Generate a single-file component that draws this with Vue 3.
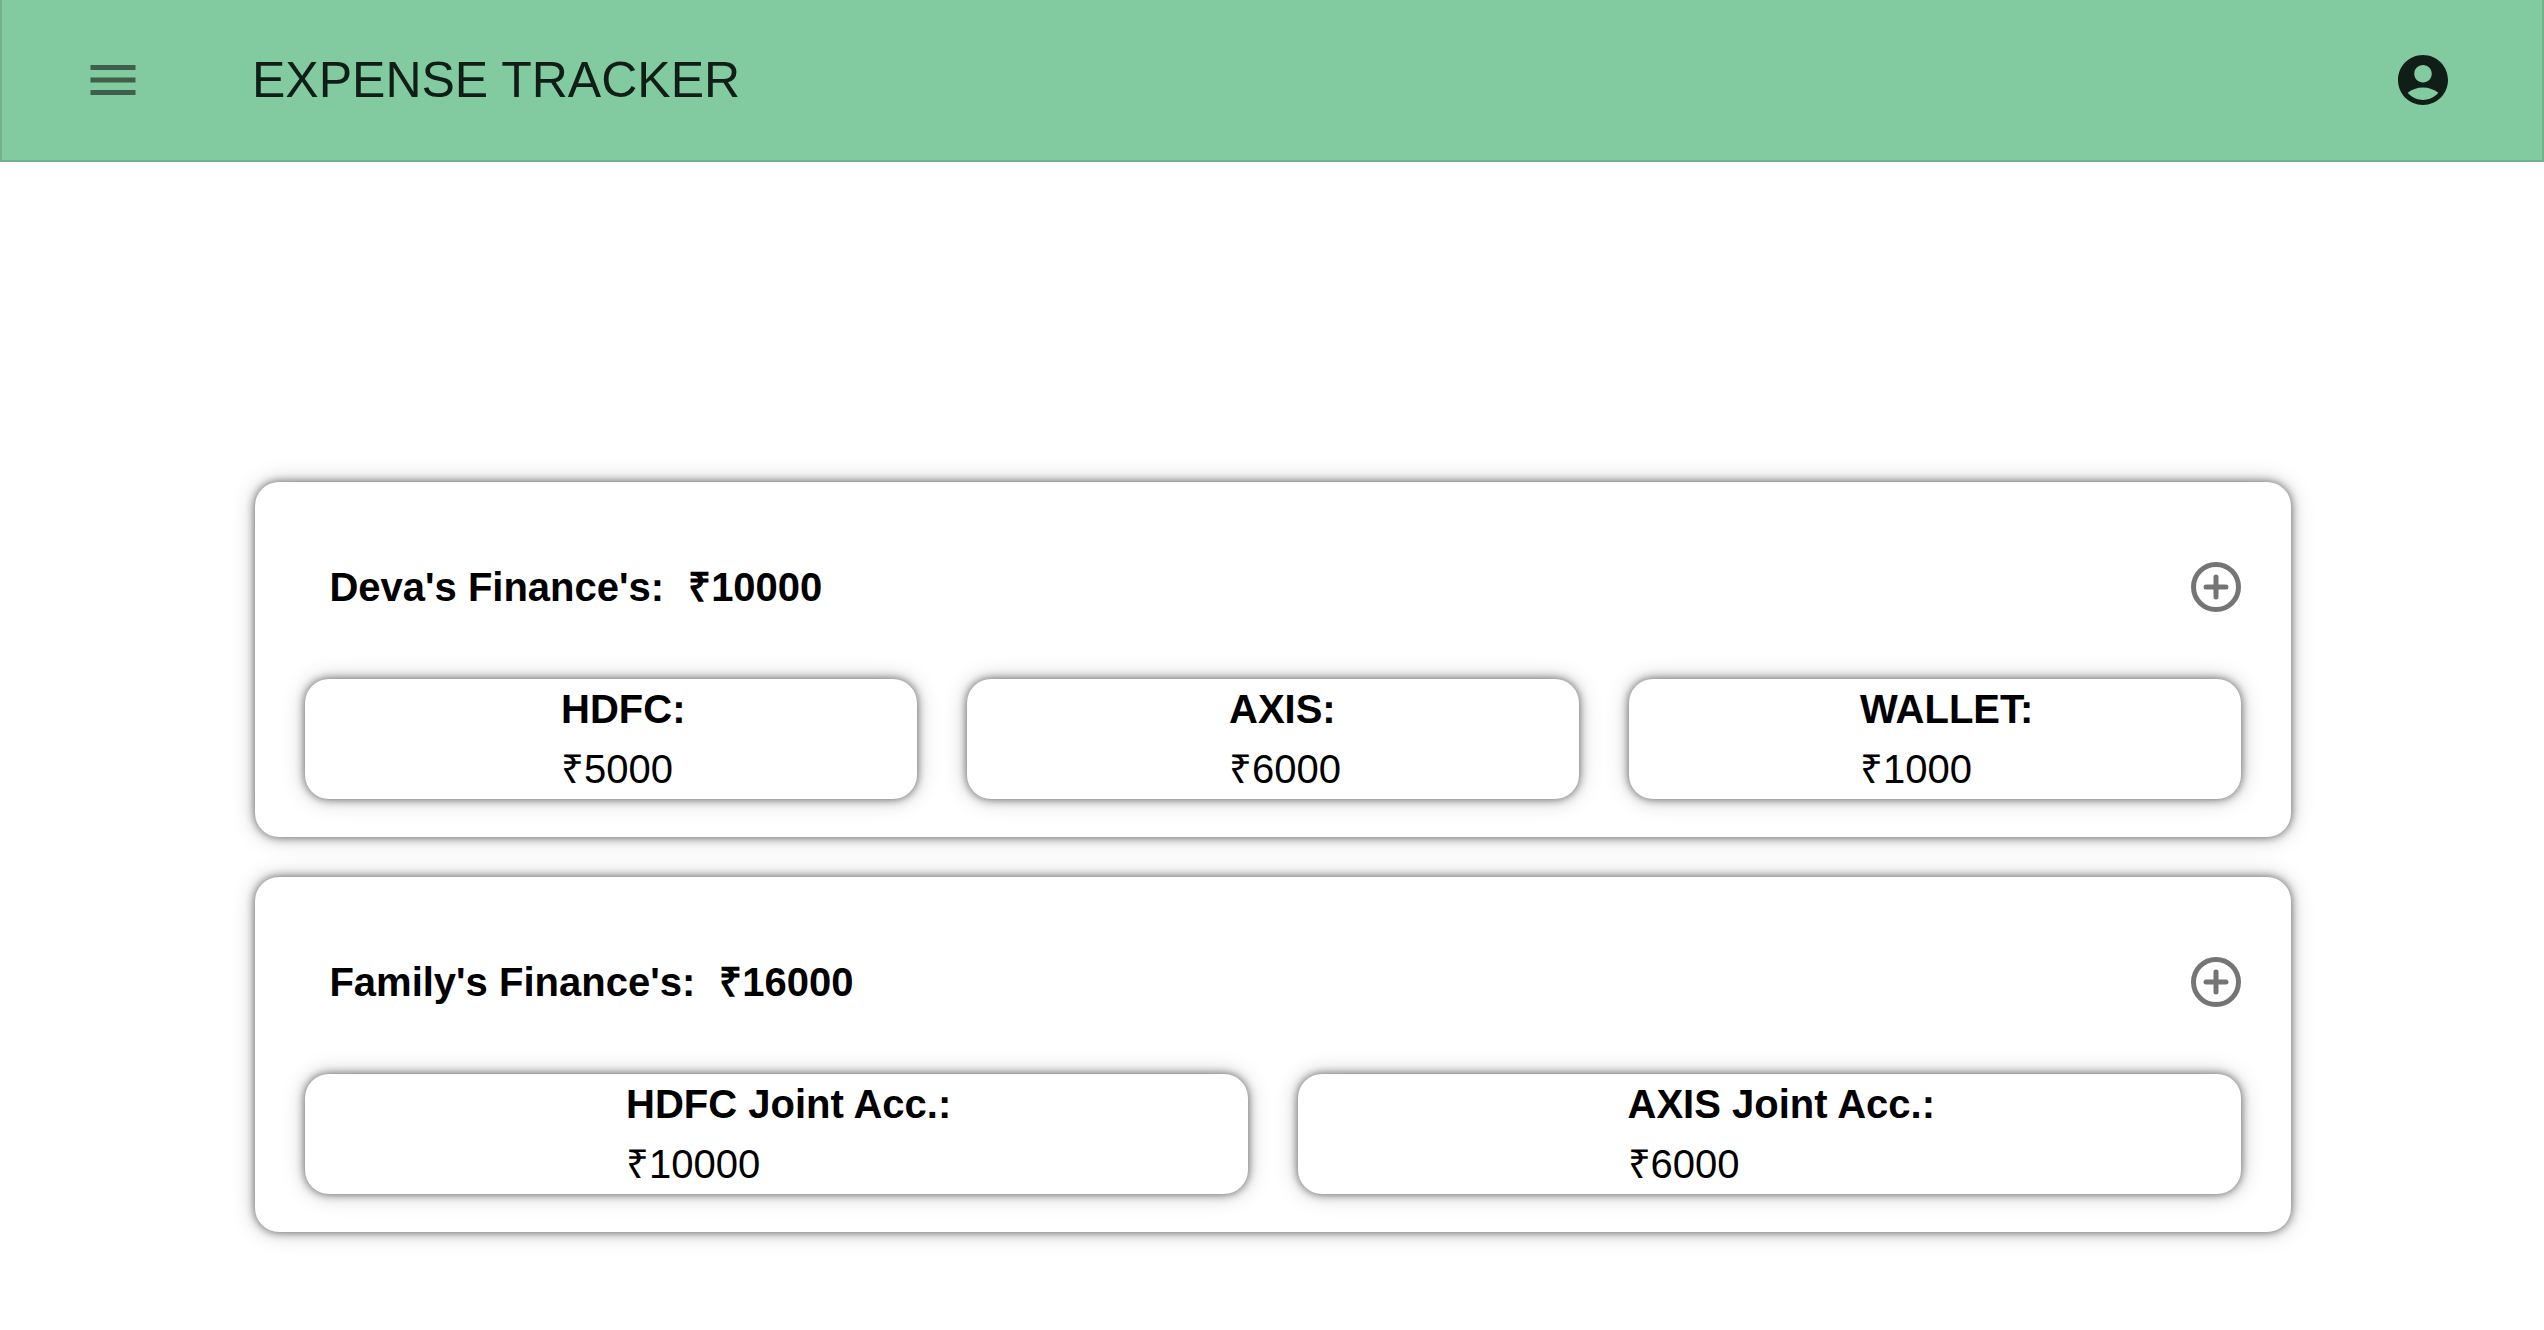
<script setup>
const groups = [
  {
    name: "Deva's Finance's:",
    total: 10000,
    accounts: [
      { name: 'HDFC:', amount: 5000 },
      { name: 'AXIS:', amount: 6000 },
      { name: 'WALLET:', amount: 1000 },
    ],
  },
  {
    name: "Family's Finance's:",
    total: 16000,
    accounts: [
      { name: 'HDFC Joint Acc.:', amount: 10000 },
      { name: 'AXIS Joint Acc.:', amount: 6000 },
    ],
  },
]
</script>

<template>
  <div class="app">
    <header class="bar">
      <button class="icon-button menu" type="button" aria-label="Menu">
        <svg viewBox="0 0 24 24"><path d="M3 18h18v-2H3v2zm0-5h18v-2H3v2zm0-7v2h18V6H3z" /></svg>
      </button>
      <h1 class="brand">EXPENSE TRACKER</h1>
      <button class="icon-button account" type="button" aria-label="Account">
        <svg viewBox="0 0 24 24">
          <path
            d="M12 2C6.480 2 2 6.480 2 12s4.480 10 10 10 10-4.480 10-10S17.520 2 12 2zm0 4c1.930 0 3.500 1.570 3.500 3.500S13.930 13 12 13s-3.500-1.570-3.500-3.500S10.070 6 12 6zm0 14c-2.030 0-4.430-.820-6.140-2.880C7.550 15.800 9.680 15 12 15s4.450.800 6.140 2.120C16.430 19.180 14.030 20 12 20z"
          />
        </svg>
      </button>
    </header>

    <main class="groups">
      <section v-for="group in groups" :key="group.name" class="card group">
        <div class="group-head">
          <h2 class="group-title">
            <span>{{ group.name }}</span>
            <span>₹{{ group.total }}</span>
          </h2>
          <button class="icon-button add" type="button" aria-label="Add account">
            <svg viewBox="0 0 24 24">
              <circle cx="12" cy="12" r="9" />
              <path d="M12 8v8M8 12h8" />
            </svg>
          </button>
        </div>
        <div class="accounts">
          <article v-for="account in group.accounts" :key="account.name" class="card account-card">
            <div>
              <h3 class="account-name">{{ account.name }}</h3>
              <p class="amount">₹{{ account.amount }}</p>
            </div>
          </article>
        </div>
      </section>
    </main>
  </div>
</template>

<style>
body {
  margin: 0;
  background: #fff;
}
</style>

<style scoped>
.app {
  box-sizing: border-box;
  min-height: 100vh;
  padding-bottom: 40px;
  font-family: "Liberation Sans", Arial, Helvetica, sans-serif;
  font-size: 40px;
  line-height: 60px;
  color: #000;
}

h1,
h2,
h3,
p {
  margin: 0;
  font-size: inherit;
}

.bar {
  box-sizing: border-box;
  display: grid;
  grid-template-columns: 250px 1fr auto;
  align-items: center;
  height: 162px;
  padding-right: 89px;
  border: 2px solid #73b18d;
  border-top: 0;
  background: #82caa0;
  color: #111d17;
}

.brand {
  font-size: 50px;
  font-weight: 400;
}

.icon-button {
  display: block;
  width: 60px;
  height: 60px;
  padding: 0;
  border: 0;
  background: none;
  color: inherit;
  cursor: pointer;
}

.icon-button svg {
  display: block;
  width: 100%;
  height: 100%;
  fill: currentColor;
}

.menu {
  margin-left: 81px;
  color: #3d5f4b;
}

.groups {
  display: flex;
  flex-direction: column;
  gap: 40px;
  width: 80%;
  margin: 320px 0 0 calc(10% + 1px);
}

.card {
  border-radius: 24px;
  background: #fff;
  box-shadow: 0 0 10px rgba(0, 0, 0, 0.6), 0 0 24px rgba(0, 0, 0, 0.2);
}

.group {
  padding: 75px 50px 38px;
}

.group-head {
  display: flex;
  align-items: center;
  justify-content: space-between;
  margin-bottom: 62px;
  padding-left: 24px;
}

.group-title {
  display: flex;
  gap: 24px;
}

.add {
  margin-right: -5px;
  color: #757575;
}

.add svg {
  fill: none;
  stroke: currentColor;
  stroke-width: 2;
  stroke-linecap: round;
}

.accounts {
  display: flex;
  gap: 50px;
}

.account-card {
  box-sizing: border-box;
  display: flex;
  flex: 1 1 0;
  justify-content: center;
  padding-left: 24px;
}
</style>
